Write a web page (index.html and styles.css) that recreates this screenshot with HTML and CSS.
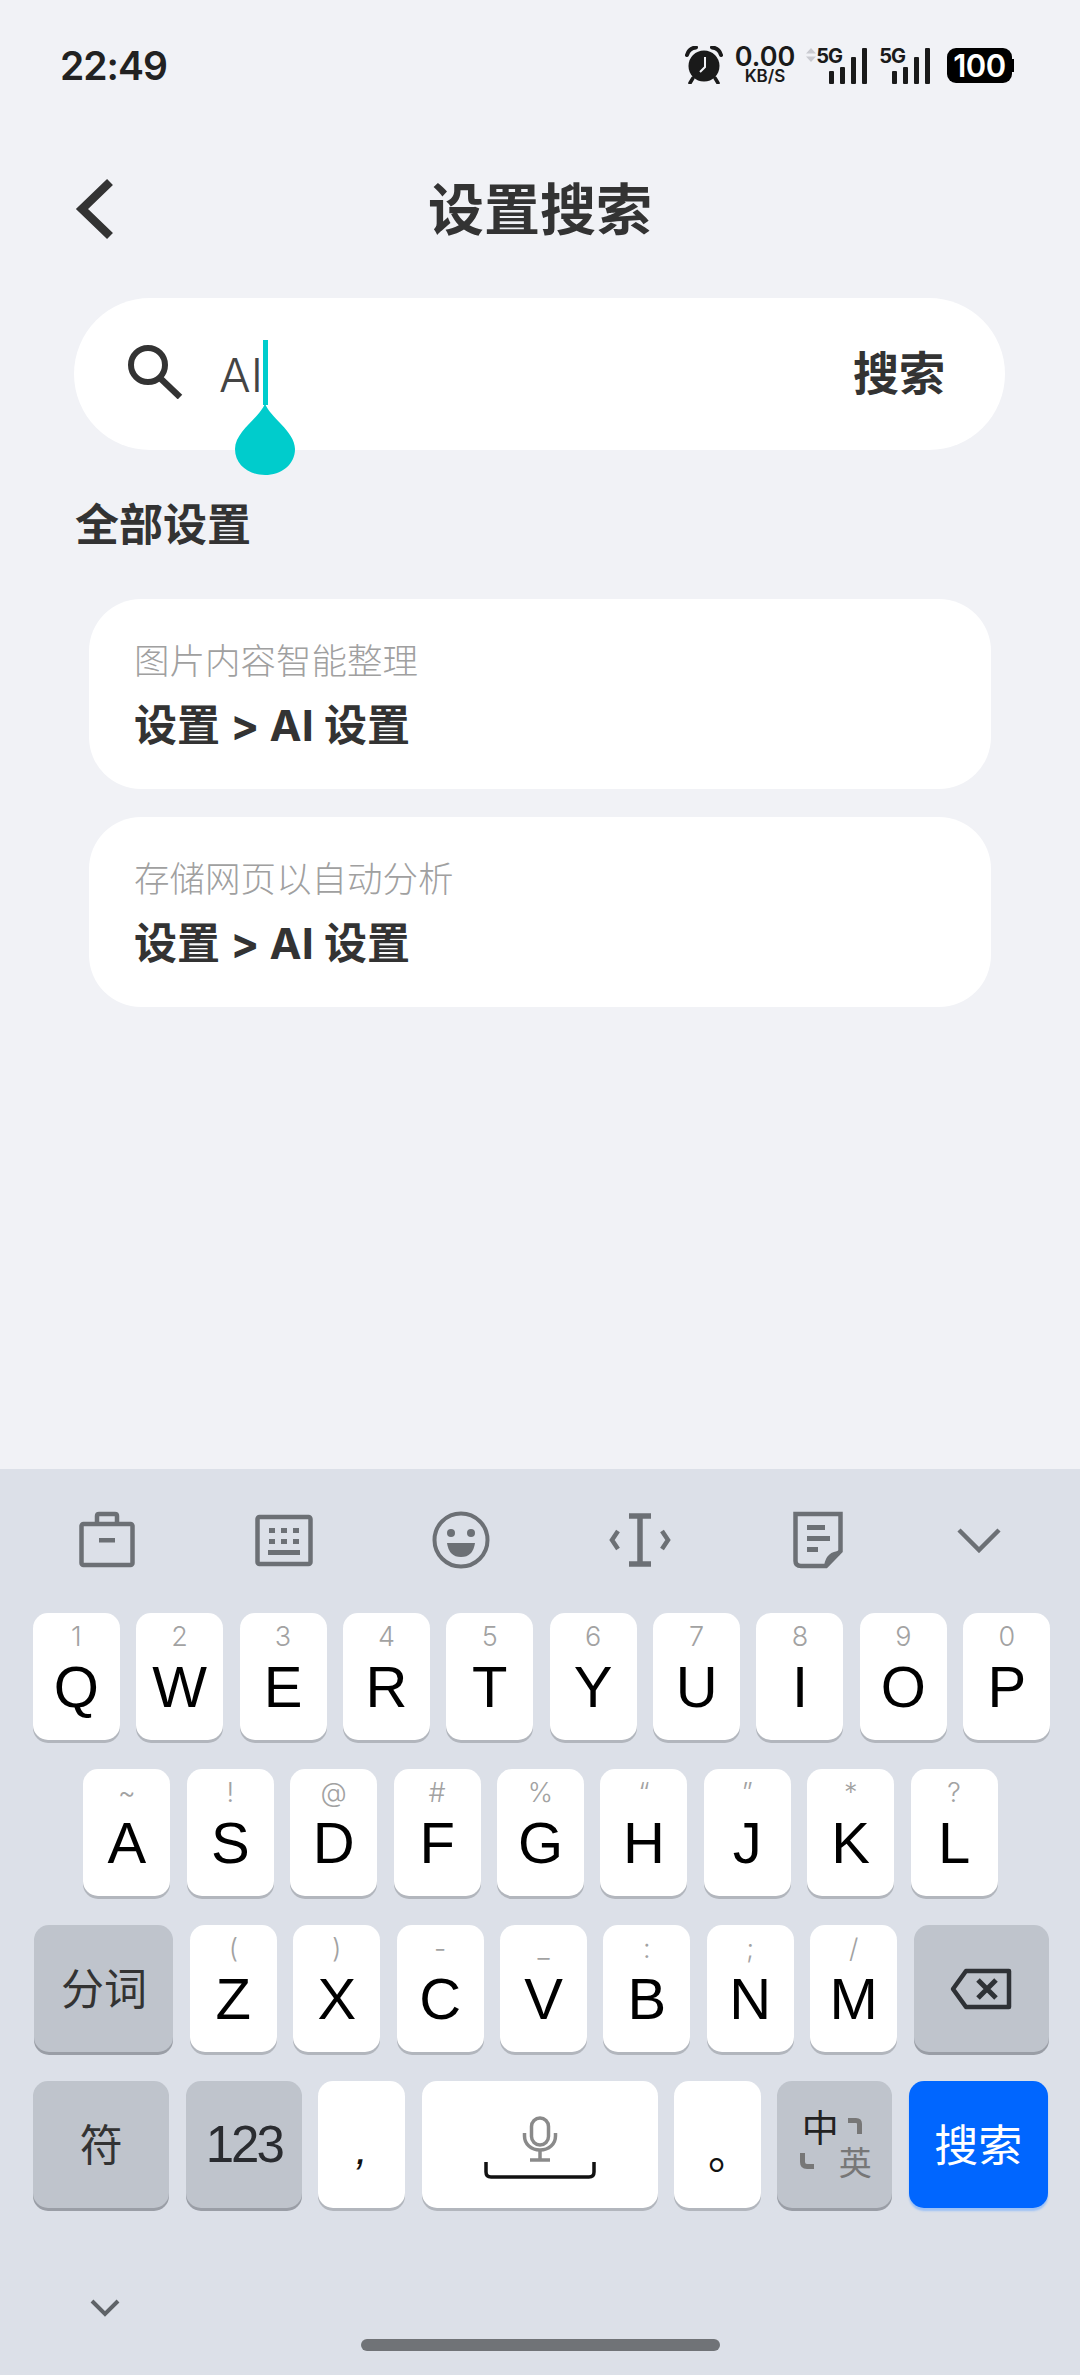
FILE: index.html
```html
<!DOCTYPE html>
<html lang="zh">
<head>
  <meta charset="UTF-8">
  <meta name="viewport" content="width=device-width, initial-scale=1">
  <title>设置搜索</title>
  <link rel="stylesheet" href="styles.css">
</head>
<body>

  <div class="status-bar">
    <span class="time">22:49</span>
    <div class="status-icons">
      <svg class="alarm" width="38" height="38" viewBox="0 0 38 38">
        <circle cx="19" cy="20" r="15.5" fill="#1a1a1a"/>
        <path d="M2 9 Q4 2 11 1.5 M36 9 Q34 2 27 1.5" fill="none" stroke="#1a1a1a" stroke-width="4" stroke-linecap="round"/>
        <path d="M8 32 L5 37 M30 32 L33 37" stroke="#1a1a1a" stroke-width="3.5" stroke-linecap="round"/>
        <path d="M20 11 V21 L15 26" fill="none" stroke="#f1f2f6" stroke-width="2"/>
      </svg>
      <div class="speed">
        <span class="speed-num">0.00</span>
        <span class="speed-unit">KB/S</span>
      </div>
      <div class="signal">
        <svg class="updown" width="10" height="14" viewBox="0 0 10 14">
          <path d="M5 0 L10 5.5 H0 Z M5 14 L0 8.5 H10 Z" fill="#c9cad0"/>
        </svg>
        <span class="net">5G</span>
        <div class="bars">
          <i class="b1"></i><i class="b2"></i><i class="b3"></i><i class="b4"></i>
        </div>
      </div>
      <div class="signal">
        <span class="net">5G</span>
        <div class="bars">
          <i class="b1"></i><i class="b2"></i><i class="b3"></i><i class="b4"></i>
        </div>
      </div>
      <div class="battery">100</div>
    </div>
  </div>

  <header class="top-bar">
    <svg class="back" width="40" height="62" viewBox="0 0 40 62">
      <path d="M35 4 L7 31 L35 58" fill="none" stroke="#333" stroke-width="8.5"/>
    </svg>
    <h1>设置搜索</h1>
  </header>

  <div class="search-box">
    <svg class="search-icon" width="56" height="54" viewBox="0 0 56 54">
      <circle cx="21" cy="20" r="17" fill="none" stroke="#333" stroke-width="6"/>
      <path d="M33 33 L53 52" stroke="#333" stroke-width="6.5"/>
    </svg>
    <div class="input">
      <span class="input-text">AI</span>
      <span class="caret">
        <svg class="handle" width="60" height="74" viewBox="0 0 60 74">
          <path d="M30 0 C34 14 60 28 60 46 C60 62 46 72 30 72 C14 72 0 62 0 46 C0 28 26 14 30 0 Z" fill="#00cccc"/>
        </svg>
      </span>
    </div>
    <span class="search-btn">搜索</span>
  </div>

  <h2 class="section-title">全部设置</h2>

  <div class="result-list">
    <div class="result-card">
      <p class="result-name">图片内容智能整理</p>
      <p class="result-path">设置 &gt; AI 设置</p>
    </div>
    <div class="result-card">
      <p class="result-name">存储网页以自动分析</p>
      <p class="result-path">设置 &gt; AI 设置</p>
    </div>
  </div>

  <div class="keyboard">
    <div class="toolbar">
      <svg width="58" height="58" viewBox="0 0 58 58">
        <rect x="3.5" y="13" width="51" height="41" rx="2" fill="none" stroke="#6c7075" stroke-width="4.5"/>
        <path d="M19 13 V5 Q19 3 21 3 H37 Q39 3 39 5 V13" fill="none" stroke="#6c7075" stroke-width="4.5"/>
        <rect x="21" y="27" width="16" height="4.5" fill="#6c7075"/>
      </svg>
      <svg width="58" height="58" viewBox="0 0 58 58">
        <rect x="2.5" y="6" width="53" height="47" rx="2" fill="none" stroke="#6c7075" stroke-width="4.5"/>
        <path d="M12 17 h6 v5 h-6 z M24 17 h6 v5 h-6 z M36 17 h6 v5 h-6 z M12 28 h6 v5 h-6 z M24 28 h6 v5 h-6 z M36 28 h6 v5 h-6 z" fill="#6c7075" transform="translate(2 0)"/>
        <rect x="13" y="39" width="32" height="5" fill="#6c7075"/>
      </svg>
      <svg width="58" height="58" viewBox="0 0 58 58">
        <circle cx="29" cy="29" r="26.5" fill="none" stroke="#6c7075" stroke-width="4"/>
        <circle cx="19" cy="22" r="4" fill="#6c7075"/>
        <circle cx="39" cy="22" r="4" fill="#6c7075"/>
        <path d="M15 32 H43 Q41 46 29 46 Q17 46 15 32 Z" fill="#6c7075"/>
      </svg>
      <svg width="62" height="58" viewBox="0 0 62 58">
        <path d="M20 5 H42 M20 53 H42 M31 5 V53" fill="none" stroke="#6c7075" stroke-width="5.5"/>
        <path d="M9 20 L3 29 L9 38 M53 20 L59 29 L53 38" fill="none" stroke="#6c7075" stroke-width="4.5"/>
      </svg>
      <svg class="note" width="50" height="58" viewBox="0 0 50 58">
        <path d="M2.5 3 H47.5 V40 L33 55 H8 Q2.5 55 2.5 50 Z" fill="none" stroke="#6c7075" stroke-width="4.5"/>
        <path d="M33 55 Q35 42 47 42" fill="none" stroke="#6c7075" stroke-width="4"/>
        <path d="M14 14 H32 V19 H14 Z M14 25 H37 V30 H14 Z M14 36 H25 V41 H14 Z" fill="#6c7075"/>
      </svg>
      <svg class="hide-kb" width="44" height="26" viewBox="0 0 44 26">
        <path d="M2 3 L22 23 L42 3" fill="none" stroke="#6c7075" stroke-width="4.5"/>
      </svg>
    </div>

    <div class="key-rows">
      <div class="key-row">
        <div class="key"><span class="sub">1</span><span class="main">Q</span></div>
        <div class="key"><span class="sub">2</span><span class="main">W</span></div>
        <div class="key"><span class="sub">3</span><span class="main">E</span></div>
        <div class="key"><span class="sub">4</span><span class="main">R</span></div>
        <div class="key"><span class="sub">5</span><span class="main">T</span></div>
        <div class="key"><span class="sub">6</span><span class="main">Y</span></div>
        <div class="key"><span class="sub">7</span><span class="main">U</span></div>
        <div class="key"><span class="sub">8</span><span class="main">I</span></div>
        <div class="key"><span class="sub">9</span><span class="main">O</span></div>
        <div class="key"><span class="sub">0</span><span class="main">P</span></div>
      </div>
      <div class="key-row">
        <div class="key"><span class="sub">~</span><span class="main">A</span></div>
        <div class="key"><span class="sub">!</span><span class="main">S</span></div>
        <div class="key"><span class="sub">@</span><span class="main">D</span></div>
        <div class="key"><span class="sub">#</span><span class="main">F</span></div>
        <div class="key"><span class="sub">%</span><span class="main">G</span></div>
        <div class="key"><span class="sub">“</span><span class="main">H</span></div>
        <div class="key"><span class="sub">”</span><span class="main">J</span></div>
        <div class="key"><span class="sub">*</span><span class="main">K</span></div>
        <div class="key"><span class="sub">?</span><span class="main">L</span></div>
      </div>
      <div class="key-row">
        <div class="key key-func w-fenci"><span class="func-text">分词</span></div>
        <div class="key"><span class="sub">(</span><span class="main">Z</span></div>
        <div class="key"><span class="sub">)</span><span class="main">X</span></div>
        <div class="key"><span class="sub">-</span><span class="main">C</span></div>
        <div class="key"><span class="sub">_</span><span class="main">V</span></div>
        <div class="key"><span class="sub">:</span><span class="main">B</span></div>
        <div class="key"><span class="sub">;</span><span class="main">N</span></div>
        <div class="key"><span class="sub">/</span><span class="main">M</span></div>
        <div class="key key-func w-back">
          <svg width="62" height="42" viewBox="0 0 62 42">
            <path d="M16 3 H59 V39 H16 L3 21 Z" fill="none" stroke="#2f3236" stroke-width="4.5" stroke-linejoin="round"/>
            <path d="M28 12 L46 30 M46 12 L28 30" stroke="#2f3236" stroke-width="5"/>
          </svg>
        </div>
      </div>
      <div class="key-row">
        <div class="key key-func w-fu"><span class="func-text">符</span></div>
        <div class="key key-func w-num"><span class="num-text">123</span></div>
        <div class="key"><span class="punct comma">,</span></div>
        <div class="key w-space">
          <svg width="36" height="46" viewBox="0 0 36 46">
            <rect x="9.5" y="2" width="17" height="27" rx="8.5" fill="none" stroke="#8a8a8a" stroke-width="3.5"/>
            <path d="M2.5 17 V20 C2.5 28 9 34 18 34 C27 34 33.5 28 33.5 20 V17" fill="none" stroke="#8a8a8a" stroke-width="3.5"/>
            <path d="M18 34 V43 M8 44 H28" stroke="#8a8a8a" stroke-width="3.5"/>
          </svg>
          <svg width="112" height="18" viewBox="0 0 112 18">
            <path d="M2 0 V10 Q2 15 7 15 H105 Q110 15 110 10 V0" fill="none" stroke="#111" stroke-width="3.5"/>
          </svg>
        </div>
        <div class="key"><span class="punct period">。</span></div>
        <div class="key key-func w-lang">
          <span class="lang-zh">中</span>
          <svg width="14" height="16" viewBox="0 0 14 16"><path d="M0 2.5 H8 Q11.5 2.5 11.5 6 V16" fill="none" stroke="#777" stroke-width="5"/></svg>
          <svg class="corner-bl" width="14" height="16" viewBox="0 0 14 16"><path d="M2.5 0 V9 Q2.5 13.5 7 13.5 H14" fill="none" stroke="#777" stroke-width="5"/></svg>
          <span class="lang-en">英</span>
        </div>
        <div class="key key-go w-go"><span class="func-text">搜索</span></div>
      </div>
    </div>

    <div class="kb-bottom">
      <svg class="kb-switch" width="30" height="18" viewBox="0 0 30 18">
        <path d="M2 2 L15 15 L28 2" fill="none" stroke="#5f6368" stroke-width="4"/>
      </svg>
      <div class="home-bar"></div>
    </div>
  </div>

</body>
</html>
```

FILE: styles.css
```css
:root {
  --bg: #f1f2f6;
  --text: #333333;
  --text-light: #a0a0a0;
  --kb-bg: #dce0e8;
  --key-func: #bfc4cc;
  --accent: #00cccc;
  --blue: #0066ff;
  --font-main: Inter, "Noto Sans CJK SC", sans-serif;
  --font-key: "Liberation Sans", "Noto Sans CJK SC", sans-serif;
}

* {
  box-sizing: border-box;
}

body {
  margin: 0;
  width: 1080px;
  height: 2375px;
  background: var(--bg);
  color: var(--text);
  font-family: var(--font-main);
  display: flex;
  flex-direction: column;
  overflow: hidden;
}

/* Status bar */
.status-bar {
  height: 130px;
  padding: 0 66px 0 60px;
  display: flex;
  align-items: center;
  justify-content: space-between;
}

.time {
  font-size: 39px;
  font-weight: 600;
  color: #222;
  letter-spacing: -1px;
}

.status-icons {
  display: flex;
  align-items: center;
  color: #1a1a1a;
}

.speed {
  display: flex;
  flex-direction: column;
  align-items: center;
  width: 60px;
  margin-left: 12px;
}

.speed-num {
  font-size: 27px;
  font-weight: 600;
  line-height: 22px;
}

.speed-unit {
  font-size: 17px;
  font-weight: 600;
  line-height: 16px;
}

.signal {
  position: relative;
  width: 48px;
  height: 38px;
  margin-left: 13px;
}

.signal:nth-child(3) {
  width: 61px;
  margin-left: 11px;
}

.signal:nth-child(4) {
  margin-left: 15px;
}

.updown {
  position: absolute;
  left: 0;
  top: 2px;
}

.net {
  position: absolute;
  right: 25px;
  top: 0;
  font-size: 20px;
  line-height: 20px;
  font-weight: 700;
  letter-spacing: -1px;
}

.bars {
  position: absolute;
  right: 0;
  bottom: 0;
  display: flex;
  align-items: flex-end;
  gap: 6px;
  height: 36px;
}

.bars i {
  display: block;
  width: 5px;
  background: #1a1a1a;
  border-radius: 1px;
}

.bars .b1 { height: 13px; }
.bars .b2 { height: 17px; }
.bars .b3 { height: 27px; }
.bars .b4 { height: 36px; }

.battery {
  position: relative;
  width: 65px;
  height: 35px;
  margin: 0 2px 0 17px;
  background: #000;
  color: #fff;
  border-radius: 9px;
  font-size: 31px;
  font-weight: 600;
  line-height: 35px;
  text-align: center;
  letter-spacing: -0.5px;
}

.battery::after {
  content: "";
  position: absolute;
  right: -2px;
  top: 11px;
  width: 2px;
  height: 13px;
  background: #000;
}

/* Header */
.top-bar {
  position: relative;
  height: 158px;
  padding-bottom: 8px;
  display: flex;
  align-items: center;
  justify-content: center;
}

.back {
  position: absolute;
  left: 75px;
  top: 48px;
}

.top-bar h1 {
  margin: 0;
  font-size: 56px;
  font-weight: 700;
  color: var(--text);
}

/* Search */
.search-box {
  width: 931px;
  height: 152px;
  margin: 10px 0 0 74px;
  padding: 0 60px 0 53px;
  background: #fff;
  border-radius: 76px;
  display: flex;
  align-items: center;
}

.search-icon {
  margin-top: -4px;
}

.input {
  flex: 1;
  display: flex;
  align-items: center;
  margin-left: 36px;
}

.input-text {
  font-size: 47px;
  font-weight: 300;
  line-height: 65px;
  color: #444;
}

.caret {
  position: relative;
  width: 5px;
  height: 65px;
  margin: -3px 0 0 0;
  background: var(--accent);
}

.handle {
  position: absolute;
  left: -28px;
  top: 63px;
}

.search-btn {
  font-size: 46px;
  font-weight: 700;
  line-height: 1;
  margin-top: -3px;
}

/* Results */
.section-title {
  margin: 50px 0 0 75px;
  font-size: 44px;
  font-weight: 700;
  line-height: 50px;
}

.result-list {
  width: 902px;
  margin: 49px 0 0 89px;
  display: flex;
  flex-direction: column;
  gap: 28px;
}

.result-card {
  height: 190px;
  padding: 38px 45px 0;
  background: #fff;
  border-radius: 52px;
}

.result-name {
  margin: 0;
  font-size: 35.5px;
  line-height: 50px;
  font-weight: 300;
  color: var(--text-light);
}

.result-path {
  margin: 8px 0 0;
  font-size: 43px;
  line-height: 60px;
  font-weight: 700;
}

/* Keyboard */
.keyboard {
  margin-top: auto;
  height: 906px;
  background: var(--kb-bg);
  display: flex;
  flex-direction: column;
}

.toolbar {
  height: 144px;
  padding: 0 0 2px 78px;
  display: flex;
  align-items: center;
  gap: 119px;
}

.note {
  margin-left: 3px;
}

.hide-kb {
  margin-left: -5px;
}

.key-rows {
  display: flex;
  flex-direction: column;
  gap: 29px;
  padding-left: 3px;
}

.key-row {
  display: flex;
  justify-content: center;
  gap: 16.4px;
}

.key-row:nth-child(2) {
  margin-left: -2px;
}

.key-row:last-child {
  margin-left: -2px;
}

.key {
  width: 87px;
  height: 127px;
  background: #fff;
  border-radius: 15px;
  box-shadow: 0 3px 0 #b2b6bd;
  display: flex;
  flex-direction: column;
  align-items: center;
  font-family: var(--font-key);
}

.sub {
  margin-top: 9px;
  height: 30px;
  font-family: var(--font-main);
  font-size: 27px;
  font-weight: 300;
  line-height: 30px;
  color: #a2a2a2;
}

.main {
  margin-top: 4px;
  font-size: 58px;
  line-height: 62px;
  color: #000;
}

.key-func {
  background: var(--key-func);
  box-shadow: 0 3px 0 #9a9ea6;
  justify-content: center;
}

.func-text {
  margin-top: -4px;
  font-family: "Noto Sans CJK SC", sans-serif;
  font-size: 43px;
  line-height: 1;
  color: #333;
}

.num-text {
  font-size: 51px;
  letter-spacing: -3px;
  color: #2a2c30;
}

.w-fenci { width: 139px; }
.w-back { width: 135px; }
.w-fu { width: 136px; }
.w-num { width: 116px; }
.w-lang {
  width: 115px;
  display: grid;
  grid-template-columns: 1fr 1fr;
  grid-template-rows: auto auto;
  align-content: center;
  justify-items: center;
  align-items: center;
  padding: 0 24px 6px 26px;
}
.w-go { width: 139px; }

.w-space {
  width: 236px;
  justify-content: center;
  padding-top: 6px;
}

.lang-zh {
  font-family: "Noto Sans CJK SC", sans-serif;
  font-size: 37px;
  line-height: 38px;
  color: #222;
  margin-left: 2px;
}

.lang-en {
  font-family: "Noto Sans CJK SC", sans-serif;
  font-size: 33px;
  line-height: 32px;
  color: #777;
}

.corner-bl {
  justify-self: start;
}

.punct {
  font-family: "Noto Sans CJK SC", sans-serif;
  color: #111;
  line-height: 1;
}

.comma {
  margin-top: 46px;
  font-family: var(--font-key);
  font-size: 44px;
  font-style: italic;
}

.period {
  margin-top: 47px;
  margin-left: 25px;
  font-size: 44px;
}

.key-go {
  background: var(--blue);
  box-shadow: 0 3px 2px #9cc1f5;
  justify-content: center;
}

.key-go .func-text {
  color: #fff;
  font-size: 44px;
}

.kb-bottom {
  position: relative;
  flex: 1;
  display: flex;
  justify-content: center;
}

.kb-switch {
  position: absolute;
  left: 90px;
  top: 91px;
}

.home-bar {
  width: 359px;
  height: 12px;
  margin-top: 131px;
  background: #707377;
  border-radius: 6px;
}
```
